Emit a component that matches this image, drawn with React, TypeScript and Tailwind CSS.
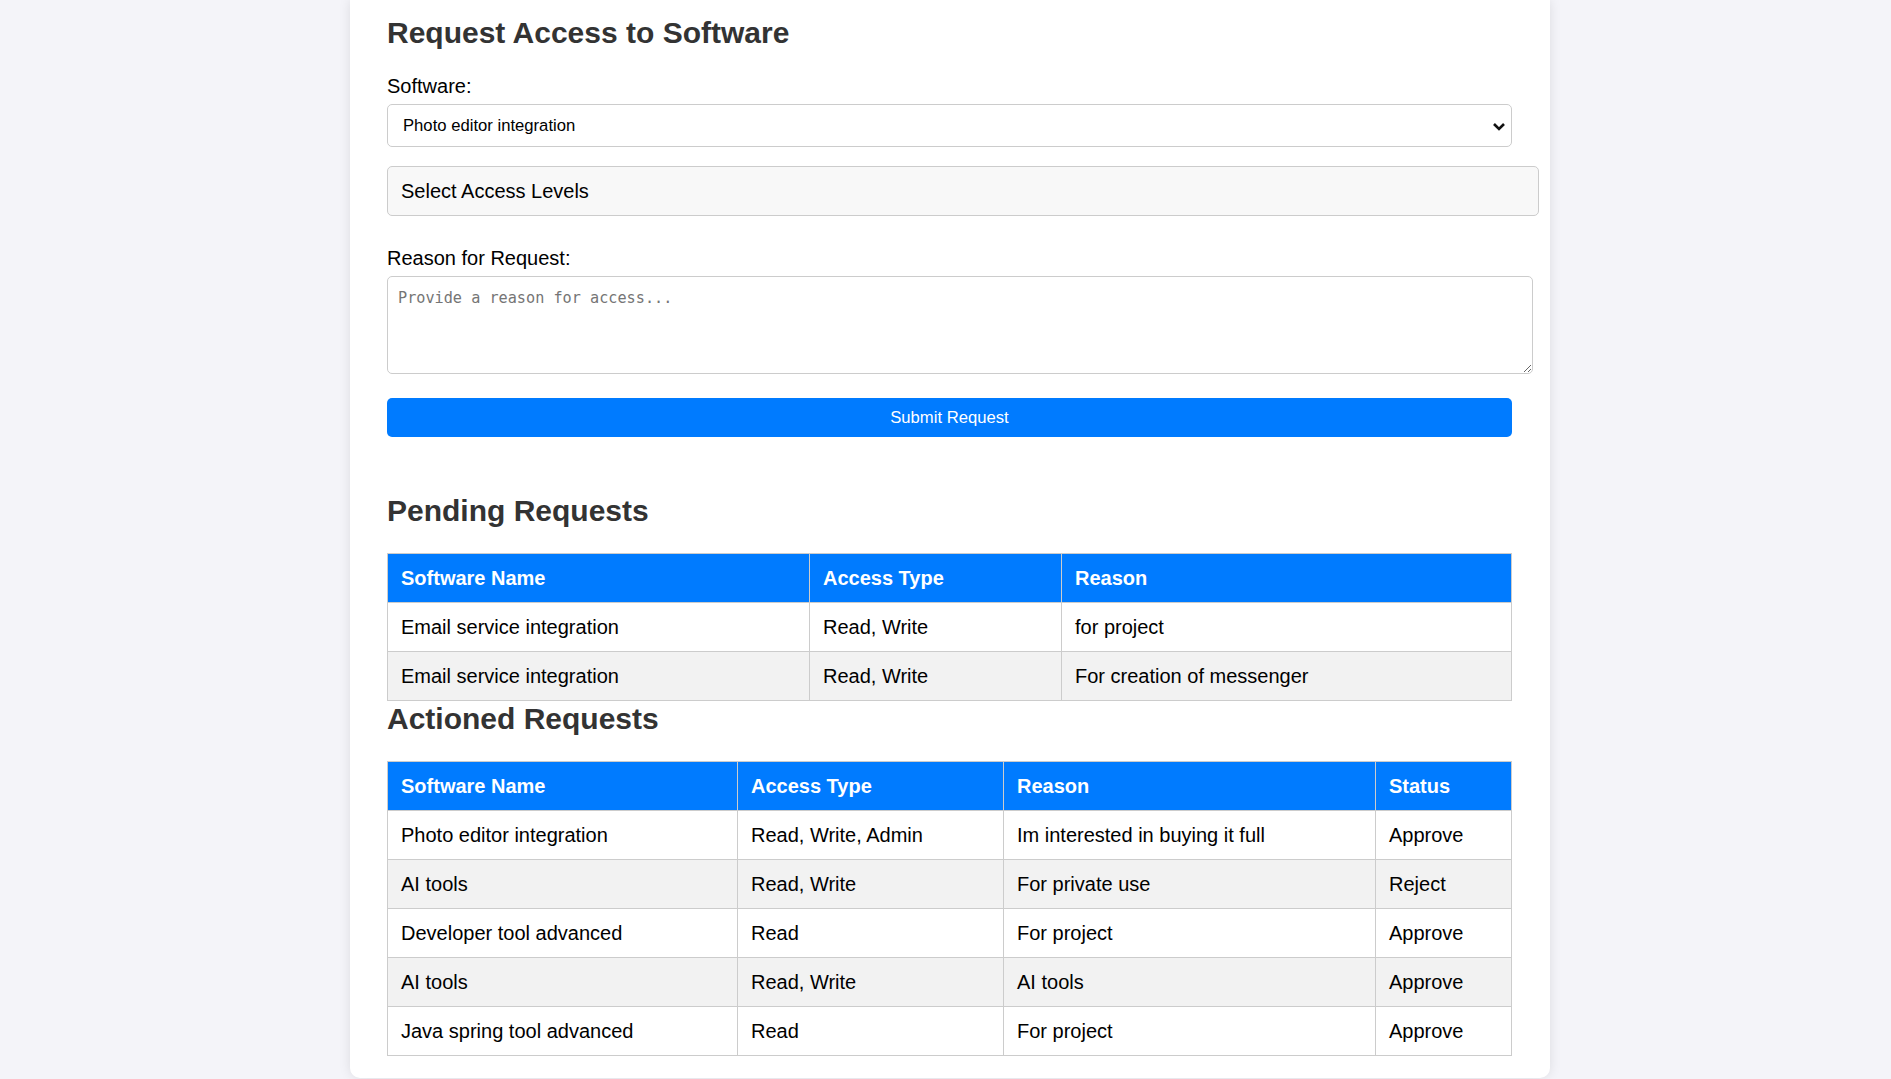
import React from 'react';

interface Row {
  name: string;
  access: string;
  reason: string;
  status?: string;
}

const pending: Row[] = [
  { name: 'Email service integration', access: 'Read, Write', reason: 'for project' },
  { name: 'Email service integration', access: 'Read, Write', reason: 'For creation of messenger' },
];

const actioned: Row[] = [
  { name: 'Photo editor integration', access: 'Read, Write, Admin', reason: 'Im interested in buying it full', status: 'Approve' },
  { name: 'AI tools', access: 'Read, Write', reason: 'For private use', status: 'Reject' },
  { name: 'Developer tool advanced', access: 'Read', reason: 'For project', status: 'Approve' },
  { name: 'AI tools', access: 'Read, Write', reason: 'AI tools', status: 'Approve' },
  { name: 'Java spring tool advanced', access: 'Read', reason: 'For project', status: 'Approve' },
];

const th = 'h-[49px] pl-[13px] pr-[12px] py-0 text-left font-bold text-white border border-[#ccc]';
const td = 'h-[49px] pl-[13px] pr-[12px] py-0 text-left border border-[#ccc]';

export default function App() {
  return (
    <div className="h-[1079px] overflow-hidden bg-[#f4f4f9] font-['Liberation_Sans',Arial,sans-serif]">
      <div className="ml-[350px] w-[1200px] bg-white rounded-b-[10px] shadow-[0_0_12px_rgba(0,0,0,0.1)] px-[37px] pt-[15px] pb-[22px]">
        <h1 className="text-[30px] leading-[35px] font-bold text-[#333]">Request Access to Software</h1>

        {/* Software select */}
        <div className="mt-[25px] text-[20px] leading-[23px] text-black">Software:</div>
        <div className="mt-[6px] h-[43px] w-[1125px] border border-[#ccc] rounded-[5px] bg-white flex items-center justify-between pl-[15px] pr-[4px] text-[16.67px] text-black">
          <span>Photo editor integration</span>
          <svg width="14" height="10" viewBox="0 0 14 10" className="mr-[1px]">
            <polyline points="2,3 7,8 12,3" fill="none" stroke="#111" strokeWidth="2.6" />
          </svg>
        </div>

        <div className="mt-[19px] h-[50px] w-[1152px] border border-[#ccc] rounded-[5px] bg-[#f8f8f8] flex items-center pl-[13px] text-[20px] text-black">
          Select Access Levels
        </div>

        {/* Reason */}
        <div className="mt-[31px] text-[20px] leading-[23px] text-black">Reason for Request:</div>
        <textarea
          className="mt-[6px] block w-[1146px] h-[98px] border border-[#ccc] rounded-[5px] p-[10px] font-['DejaVu_Sans_Mono',monospace] text-[15.2px] placeholder:text-[#757575] outline-none"
          placeholder="Provide a reason for access..."
        />

        <button className="mt-[24px] block w-[1125px] h-[39px] bg-[#007bff] text-white text-[16.67px] rounded-[5px]">
          Submit Request
        </button>

        <h2 className="mt-[56px] text-[30px] leading-[35px] font-bold text-[#333]">Pending Requests</h2>
        <table className="mt-[25px] w-[1125px] border-collapse text-[20px] text-black">
          <thead>
            <tr className="bg-[#007bff]">
              <th className={th + ' w-[422px]'}>Software Name</th>
              <th className={th + ' w-[252px]'}>Access Type</th>
              <th className={th}>Reason</th>
            </tr>
          </thead>
          <tbody>
            {pending.map((r, i) => (
              <tr key={i} className={i % 2 === 1 ? 'bg-[#f2f2f2]' : 'bg-white'}>
                <td className={td}>{r.name}</td>
                <td className={td}>{r.access}</td>
                <td className={td}>{r.reason}</td>
              </tr>
            ))}
          </tbody>
        </table>

        <h2 className="text-[30px] leading-[35px] font-bold text-[#333]">Actioned Requests</h2>
        <table className="mt-[25px] w-[1125px] border-collapse text-[20px] text-black">
          <thead>
            <tr className="bg-[#007bff]">
              <th className={th + ' w-[350px]'}>Software Name</th>
              <th className={th + ' w-[266px]'}>Access Type</th>
              <th className={th + ' w-[372px]'}>Reason</th>
              <th className={th}>Status</th>
            </tr>
          </thead>
          <tbody>
            {actioned.map((r, i) => (
              <tr key={i} className={i % 2 === 1 ? 'bg-[#f2f2f2]' : 'bg-white'}>
                <td className={td}>{r.name}</td>
                <td className={td}>{r.access}</td>
                <td className={td}>{r.reason}</td>
                <td className={td}>{r.status}</td>
              </tr>
            ))}
          </tbody>
        </table>
      </div>
    </div>
  );
}
